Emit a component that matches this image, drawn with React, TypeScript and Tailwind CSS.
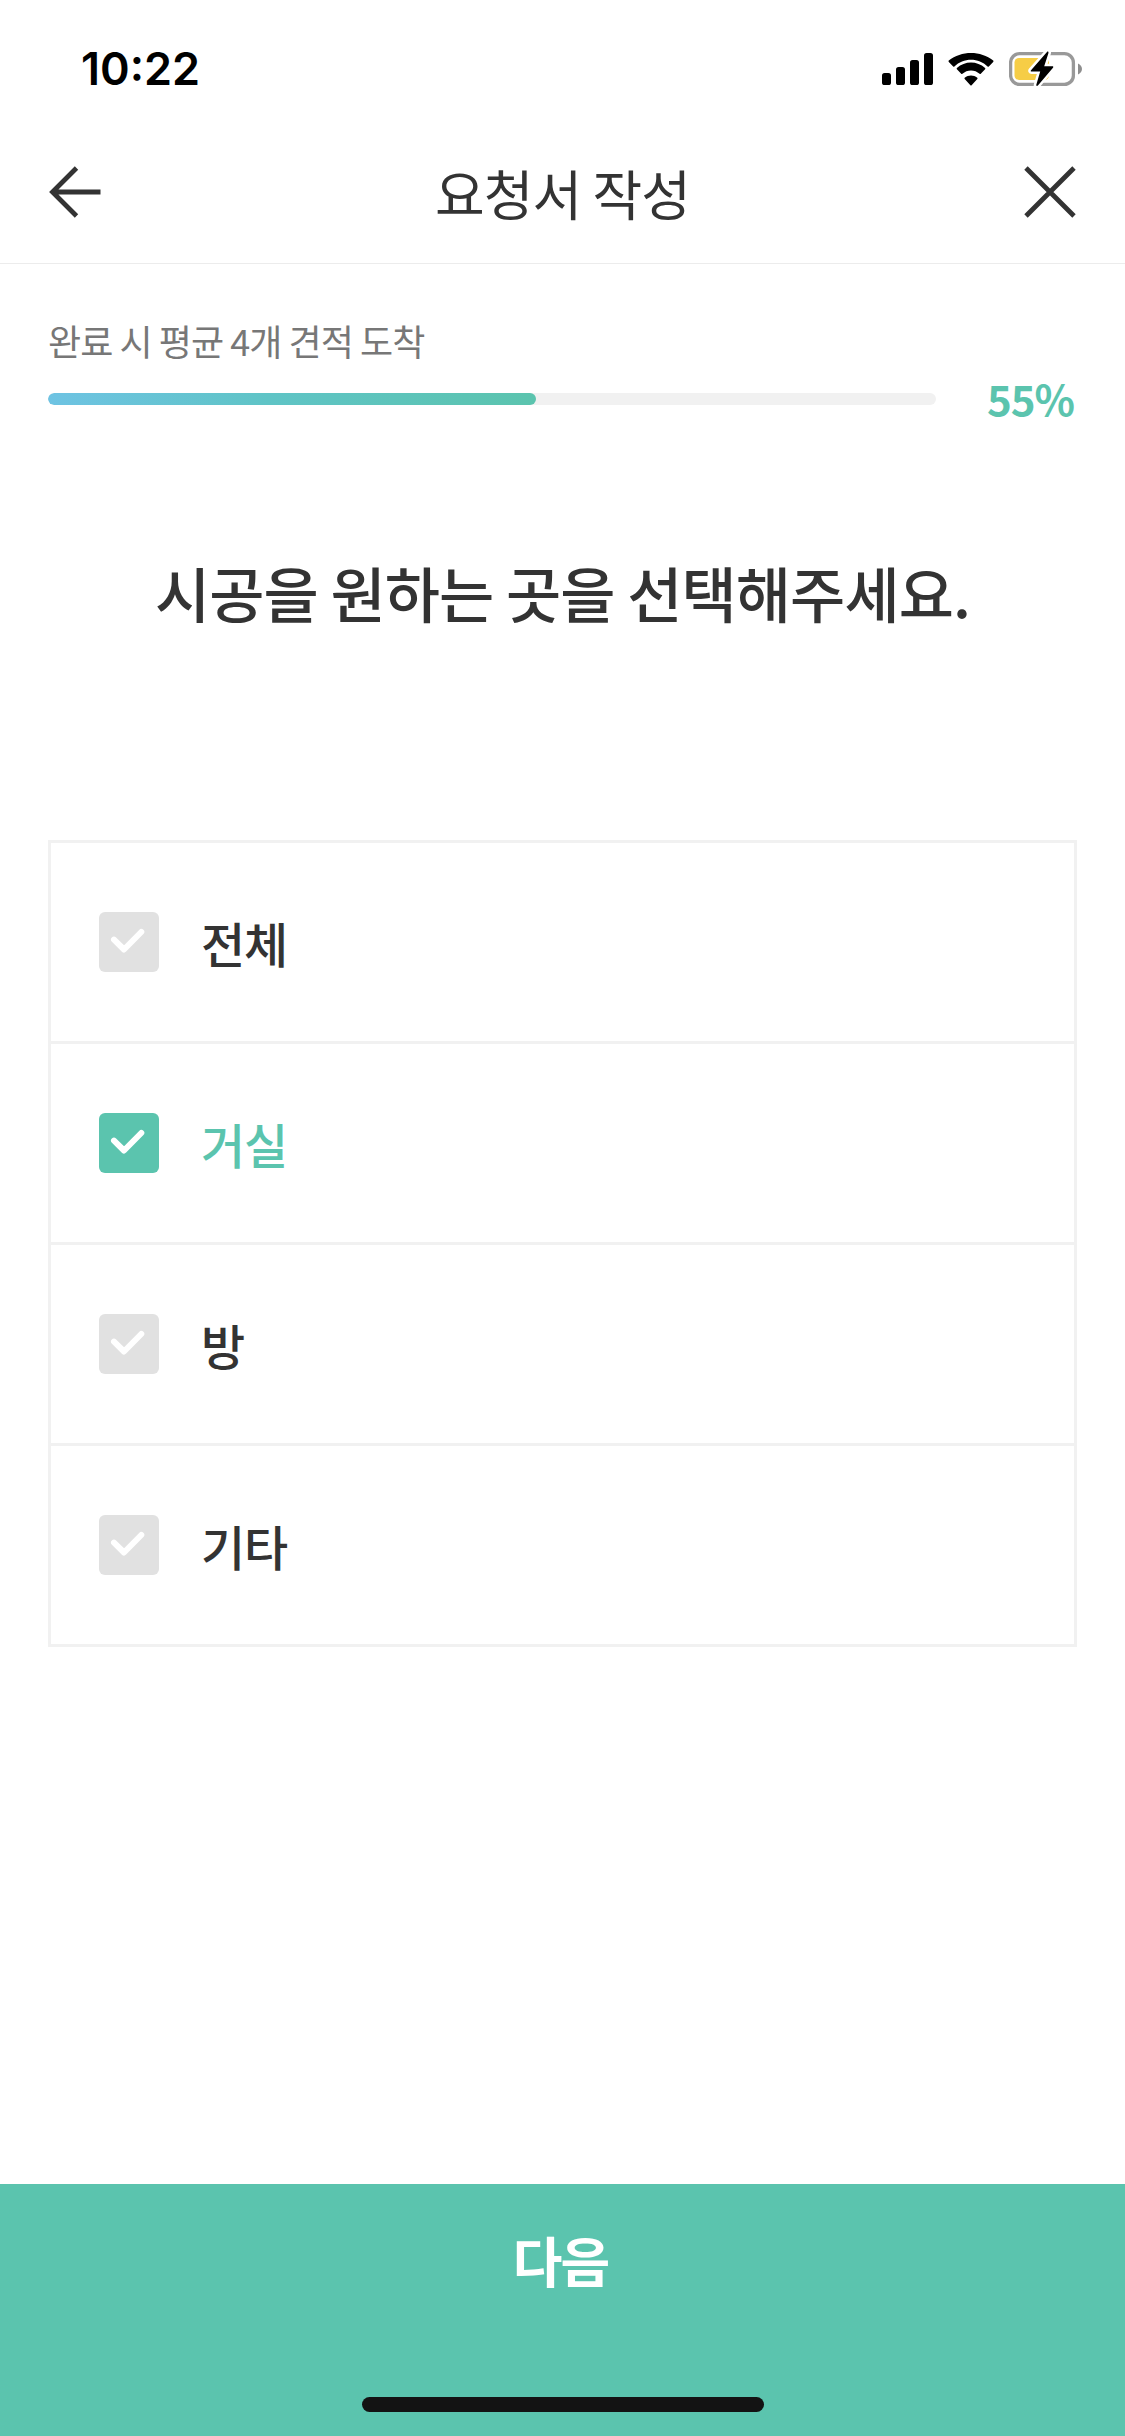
import { useState } from "react";
import clsx from "clsx";

const options = [
  { id: "all", label: "전체" },
  { id: "living", label: "거실" },
  { id: "room", label: "방" },
  { id: "etc", label: "기타" },
];

const progress = 55;

function SignalIcon() {
  return (
    <svg width="51" height="32" viewBox="0 0 51 32" fill="#000">
      <rect x="0" y="20" width="9" height="12" rx="2.6" />
      <rect x="14" y="14" width="9" height="18" rx="2.6" />
      <rect x="28" y="7" width="9" height="25" rx="2.6" />
      <rect x="42" y="0" width="9" height="32" rx="2.6" />
    </svg>
  );
}

function WifiIcon() {
  return (
    <svg width="46" height="33" viewBox="0 0 46 33" fill="#000">
      <path d="M23 6.700c6.200 0 12.100 2.400 16.600 6.700.3.300.900.300 1.200 0l4.400-4.500a1 1 0 0 0 0-1.300C32.800-2.500 13.200-2.500.8 7.600a1 1 0 0 0 0 1.300l4.400 4.500c.3.300.9.300 1.200 0C10.900 9.100 16.800 6.700 23 6.700Z" />
      <path d="M23 17.400c3.200 0 6.200 1.200 8.600 3.300.4.300.9.300 1.200 0l4.300-4.400a1 1 0 0 0 0-1.300c-7.900-7.400-20.300-7.400-28.200 0a1 1 0 0 0 0 1.300l4.300 4.400c.3.300.8.300 1.200 0 2.400-2.100 5.400-3.300 8.600-3.300Z" />
      <path d="M29.300 26c.4-.4.400-1 0-1.300-3.600-3-9-3-12.600 0-.4.300-.4.900 0 1.300l5.700 6.300c.3.400.9.400 1.200 0L29.300 26Z" />
    </svg>
  );
}

function BatteryIcon() {
  return (
    <svg width="74" height="36" viewBox="0 0 74 36">
      <rect x="1.600" y="2.600" width="62.800" height="30.800" rx="9" fill="none" stroke="#999" strokeWidth="3.300" />
      <path d="M69 12.500v11c2.300-.9 4-3 4-5.500s-1.700-4.600-4-5.500Z" fill="#8e8e8e" />
      <rect x="5.500" y="7" width="34.500" height="22" rx="4.500" fill="#f6cd46" />
      <path
        d="M38 1 22 19.200c-.6.700-.2 1.300.6 1.300h8.600l-3.900 13.200c-.3 1.200.8 1.600 1.600.7L44 16.700c.6-.7.300-1.400-.6-1.400h-8.200L39.400 2.200c.4-1.300-.6-2.100-1.400-1.200Z"
        fill="#000"
        stroke="#fff"
        strokeWidth="5"
        paintOrder="stroke"
      />
    </svg>
  );
}

function StatusBar() {
  return (
    <div className="flex h-[120px] items-center justify-between pl-[81px] pr-[42px] pt-[18px]">
      <span className="pb-0.5 font-['Inter',sans-serif] text-[45px] font-semibold leading-none text-black">
        10:22
      </span>
      <div className="flex items-center">
        <SignalIcon />
        <span className="w-[15px]" />
        <WifiIcon />
        <span className="w-[15px]" />
        <BatteryIcon />
      </div>
    </div>
  );
}

function Header() {
  return (
    <header className="flex h-36 items-center justify-between border-b border-[#ececec] px-12">
      <button type="button" aria-label="뒤로">
        <svg width="54" height="54" viewBox="0 0 54 54" fill="none" stroke="#333" strokeWidth="4.800">
          <path d="M28.500 3 4.500 27l24 24M5 27h47.500" />
        </svg>
      </button>
      <h1 className="pt-0.5 text-[54px] leading-none tracking-[-0.900px]">요청서 작성</h1>
      <button type="button" aria-label="닫기">
        <svg width="54" height="54" viewBox="0 0 54 54" fill="none" stroke="#333" strokeWidth="4.800">
          <path d="m3 3 48 48M51 3 3 51" />
        </svg>
      </button>
    </header>
  );
}

function Progress() {
  return (
    <section className="px-12 pt-[54px]">
      <p className="text-[36px] leading-[44px] tracking-[-0.950px] text-[#777]">
        완료 시 평균 4개 견적 도착
      </p>
      <div className="mt-[13px] flex h-12 items-center justify-between">
        <div className="h-3 w-[888px] overflow-hidden rounded-full bg-[#f1f1f1]">
          <div
            className="h-full rounded-full bg-linear-to-r from-[#6ec3e3] via-[#5fc4c6] via-45% to-[#5bc4ae]"
            style={{ width: `${progress}%` }}
          />
        </div>
        <span className="pb-0.5 pr-[3px] text-[42px] font-bold leading-none tracking-[-1px] text-[#5bc4ae]">
          {progress}%
        </span>
      </div>
    </section>
  );
}

function Checkbox({ checked }: { checked: boolean }) {
  return (
    <span
      className={clsx(
        "flex size-[60px] items-center justify-center rounded-md",
        checked ? "bg-[#5bc4ae]" : "bg-[#e1e1e1]",
      )}
    >
      <svg
        width="60"
        height="60"
        viewBox="0 0 60 60"
        fill="none"
        stroke="#fff"
        strokeWidth="6"
        strokeLinecap="round"
        strokeLinejoin="round"
      >
        <path d="m15 27.700 10 9.800 17.300-17.500" />
      </svg>
    </span>
  );
}

export default function App() {
  const [selected, setSelected] = useState<string[]>(["living"]);

  const toggle = (id: string) =>
    setSelected((prev) =>
      prev.includes(id) ? prev.filter((item) => item !== id) : [...prev, id],
    );

  return (
    <div className="flex h-[2436px] w-[1125px] flex-col bg-white font-['Noto_Sans_CJK_KR',sans-serif] text-[#333]">
      <StatusBar />
      <Header />
      <Progress />

      <main className="flex-1 px-12 pt-[124px]">
        <h2 className="text-center text-[60px] font-medium leading-[90px] tracking-[-0.900px]">
          시공을 원하는 곳을 선택해주세요.
        </h2>

        <ul className="mt-[203px] divide-y-3 divide-[#f1f1f1] border-3 border-[#f1f1f1]">
          {options.map((option) => {
            const checked = selected.includes(option.id);
            return (
              <li key={option.id}>
                <button
                  type="button"
                  role="checkbox"
                  aria-checked={checked}
                  onClick={() => toggle(option.id)}
                  className="flex h-[198px] w-full items-center gap-[42px] px-12"
                >
                  <Checkbox checked={checked} />
                  <span
                    className={clsx(
                      "text-[48px] font-medium leading-none tracking-[-1.200px]",
                      checked && "text-[#5bc4ae]",
                    )}
                  >
                    {option.label}
                  </span>
                </button>
              </li>
            );
          })}
        </ul>
      </main>

      <footer className="flex h-[252px] flex-col items-center justify-between bg-[#5bc4ae] pb-6">
        <button
          type="button"
          className="h-[150px] w-full pr-1 pt-0.5 text-[54px] font-bold leading-none tracking-[-2px] text-white"
        >
          다음
        </button>
        <span className="h-[15px] w-[402px] rounded-full bg-[#131313]" />
      </footer>
    </div>
  );
}
